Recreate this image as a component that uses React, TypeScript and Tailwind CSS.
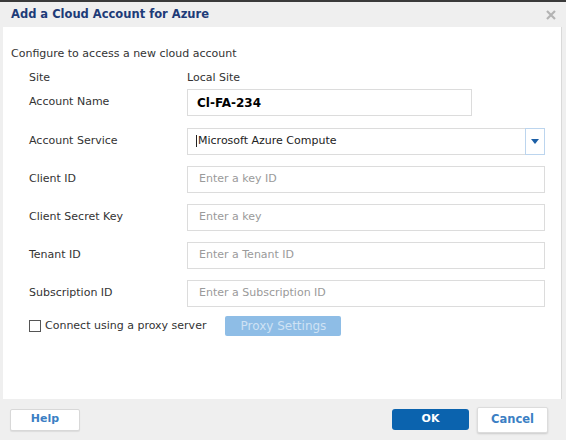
import React from "react";

const font = { fontFamily: '"DejaVu Sans", Verdana, sans-serif' };

function Field({ label, placeholder }: { label: string; placeholder: string }) {
  return (
    <div className="flex items-center">
      <span className="w-[158px] text-[11px] text-[#333]">{label}</span>
      <div className="flex h-[27px] w-[358px] items-center border border-[#dcdcdc] bg-white pl-[11px] text-[11px] text-[#9a9a9a]">
        {placeholder}
      </div>
    </div>
  );
}

export default function App() {
  return (
    <div className="flex h-[440px] w-[566px] flex-col overflow-hidden border-t-2 border-[#3a3a3a] bg-[#efefef]" style={font}>
      {/* title bar */}
      <div className="flex h-[25px] shrink-0 items-center justify-between pl-[11px] pr-[10px]">
        <span className="mt-[1px] text-[11.5px] font-bold text-[#1d3b78]">Add a Cloud Account for Azure</span>
        <svg width="10" height="10" viewBox="0 0 10 10" className="mt-[1px]">
          <path d="M1 1L9 9M9 1L1 9" stroke="#b3b3b3" strokeWidth="2.2" />
        </svg>
      </div>

      {/* body */}
      <div className="ml-[3px] h-[372px] w-[559px] shrink-0 border-r border-[#d9d9d9] bg-white pl-[8px] pt-[19px]">
        <p className="text-[11px] leading-[16px] text-[#333]">Configure to access a new cloud account</p>

        <div className="pl-[18px]">
          <div className="mt-[8px] flex text-[11px] leading-[16px] text-[#333]">
            <span className="w-[158px]">Site</span>
            <span>Local Site</span>
          </div>

          <div className="mt-[3px] flex items-center">
            <span className="w-[158px] text-[11px] text-[#333]">Account Name</span>
            <div className="flex h-[27px] w-[285px] items-center border border-[#dcdcdc] pl-[9px] text-[12px] font-bold text-black">
              Cl-FA-234
            </div>
          </div>

          <div className="mt-[12px] flex flex-col gap-[11px]">
            <div className="flex items-center">
              <span className="w-[158px] text-[11px] text-[#333]">Account Service</span>
              <div className="flex h-[27px] w-[358px] items-center border border-[#dcdcdc]">
                <span className="flex-1 pl-[8px] text-[11px] text-[#222]">
                  <span className="mr-[1px] inline-block h-[12px] w-px bg-[#222] align-middle" />
                  Microsoft Azure Compute
                </span>
                <div className="-my-px -mr-px flex h-[27px] w-[20px] items-center justify-center border border-[#bcd5ee]">
                  <svg width="8" height="5" viewBox="0 0 8 5">
                    <path d="M0 0H8L4 5Z" fill="#1c5fa6" />
                  </svg>
                </div>
              </div>
            </div>
            <Field label="Client ID" placeholder="Enter a key ID" />
            <Field label="Client Secret Key" placeholder="Enter a key" />
            <Field label="Tenant ID" placeholder="Enter a Tenant ID" />
            <Field label="Subscription ID" placeholder="Enter a Subscription ID" />
          </div>

          <div className="mt-[9px] flex items-center">
            <span className="h-[12px] w-[12px] border border-[#555] bg-white" />
            <span className="ml-[4px] text-[11px] text-[#333]">Connect using a proxy server</span>
            <div className="ml-[19px] flex h-[20px] w-[116px] items-center justify-center rounded-[2px] bg-[#8ebde6] text-[12px] text-[#cfe2f4]">
              Proxy Settings
            </div>
          </div>
        </div>
      </div>

      {/* footer */}
      <div className="flex flex-1 items-center justify-between pl-[10px] pr-[18px]">
        <button className="h-[22px] w-[70px] rounded-[2px] border border-[#d8d8d8] bg-white text-[11px] font-bold text-[#3b7fc4] shadow-[0_1px_1px_rgba(0,0,0,0.08)]">
          Help
        </button>
        <div className="flex items-center gap-[8px]">
          <button className="h-[21px] w-[77px] rounded-[3px] bg-[#0b63ae] text-[11px] font-bold text-white">OK</button>
          <button className="h-[26px] w-[71px] rounded-[2px] border border-[#dcdcdc] bg-white text-[11.5px] font-bold text-[#3b7fc4] shadow-[0_1px_2px_rgba(0,0,0,0.15)]">
            Cancel
          </button>
        </div>
      </div>
    </div>
  );
}
